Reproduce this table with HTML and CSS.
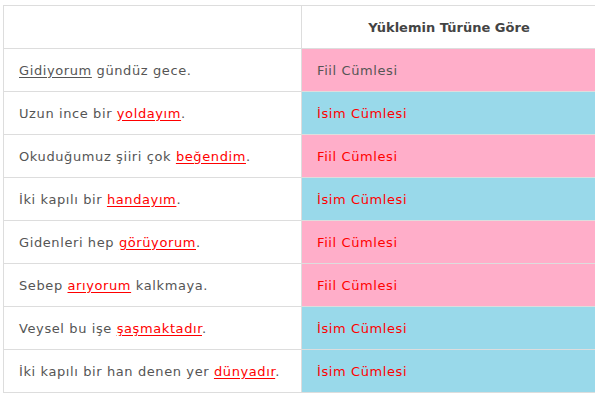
FILE: index.html
```html
<!DOCTYPE html>
<html lang="tr">
<head>
<meta charset="utf-8">
<link rel="stylesheet" href="styles.css">
</head>
<body>
<table class="grid">
  <thead>
    <tr><th class="blank"></th><th class="head">Yüklemin Türüne Göre</th></tr>
  </thead>
  <tbody>
    <tr><td><u>Gidiyorum</u> gündüz gece.</td><td class="pink">Fiil Cümlesi</td></tr>
    <tr><td>Uzun ince bir <u class="red">yoldayım</u>.</td><td class="blue red">İsim Cümlesi</td></tr>
    <tr><td>Okuduğumuz şiiri çok <u class="red">beğendim</u>.</td><td class="pink red">Fiil Cümlesi</td></tr>
    <tr><td>İki kapılı bir <u class="red">handayım</u>.</td><td class="blue red">İsim Cümlesi</td></tr>
    <tr><td>Gidenleri hep <u class="red">görüyorum</u>.</td><td class="pink red">Fiil Cümlesi</td></tr>
    <tr><td>Sebep <u class="red">arıyorum</u> kalkmaya.</td><td class="pink red">Fiil Cümlesi</td></tr>
    <tr><td>Veysel bu işe <u class="red">şaşmaktadır</u>.</td><td class="blue red">İsim Cümlesi</td></tr>
    <tr><td>İki kapılı bir han denen yer <u class="red">dünyadır</u>.</td><td class="blue red">İsim Cümlesi</td></tr>
  </tbody>
</table>
</body>
</html>
```
FILE: styles.css
```css
html, body {
  margin: 0;
  padding: 0;
  overflow: hidden;
  background: #ffffff;
}
body {
  padding: 5px 0 0 3px;
  font-family: "DejaVu Sans", "Liberation Sans", sans-serif;
  font-size: 13px;
  letter-spacing: 0.6px;
  color: #555555;
}
.grid {
  border-collapse: collapse;
  width: 594px;
  table-layout: fixed;
}
.grid th, .grid td {
  border: 1px solid #dddddd;
  height: 43px;
  padding: 0 15px;
  box-sizing: border-box;
  text-align: left;
  vertical-align: middle;
  font-weight: 400;
}
.grid tr > :first-child { width: 298px; }
.grid th.head {
  text-align: center;
  font-weight: 700;
  font-size: 13px;
  letter-spacing: 0;
  color: #444444;
}
u { text-decoration: underline; text-underline-offset: 2px; }
.red { color: #ff0000; }
.pink { background: #ffaec9; }
.blue { background: #99d9ea; }
```
